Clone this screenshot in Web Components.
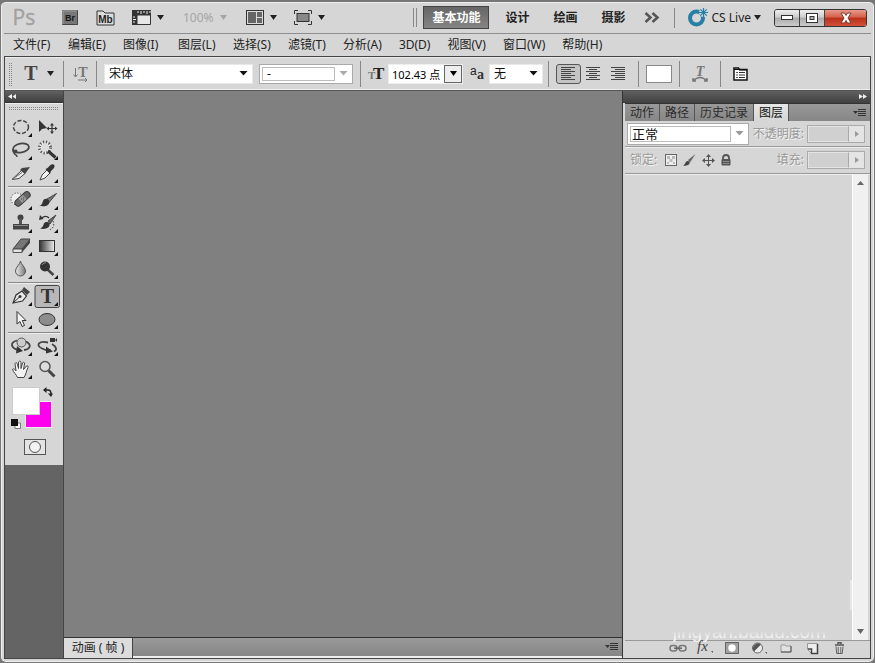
<!DOCTYPE html>
<html lang="zh-CN">
<head>
<meta charset="utf-8">
<title>Ps</title>
<style>
html,body{margin:0;height:100%}
body{background:#777;color:#222;font:12px/16px "Noto Sans","Noto Sans CJK SC",sans-serif;overflow:hidden}
</style>
</head>
<body>
<ps-window></ps-window>
<script>
const RESET = `*,:host{box-sizing:border-box}
button,input{font:inherit;color:inherit;margin:0;padding:0;border:0;background:none;border-radius:0;outline:0}
button{display:inline-flex;align-items:center;justify-content:center}
a{color:inherit;text-decoration:none}
.grip{background:repeating-linear-gradient(#d6d6d6 0 1px,transparent 1px 2px),repeating-linear-gradient(90deg,#888 0 1px,transparent 1px 2px)}`;

function define(name, css, html) {
  const t = document.createElement('template');
  t.innerHTML = `<style>${RESET}${css}</style>${html}`;
  customElements.define(name, class extends HTMLElement {
    constructor() {
      super();
      this.attachShadow({mode: 'open'}).append(t.content.cloneNode(true));
    }
  });
}

// Each entry: width, height, SVG body.
const corner = '<path d="M24 17v4h-4z" fill="#111"/>';
const ICONS = {
  down: [7, 5, '<path d="M0 0h7L3.500 5z" fill="currentColor"/>'],
  down2: [9, 5, '<path d="M.5 0h8l-4 4.500z" fill="currentColor"/>'],
  right: [4, 6, '<path d="M0 0l4 3-4 3z" fill="#999"/>'],
  up: [7, 4, '<path d="M0 4h7L3.500 0z" fill="#666"/>'],
  rewind: [8, 5, '<path d="M4 0v5L0 2.500zM8 0v5L4.500 2.500z" fill="#eee"/>'],
  forward: [8, 5, '<path d="M0 0v5l4-2.500zM4 0v5l4-2.500z" fill="#eee"/>'],
  logo: [24, 20, '<text x="-.5" y="17" font-family="Open Sans,sans-serif" font-size="21" fill="#a2a2a2" stroke="#a2a2a2" stroke-width=".4">Ps</text>'],
  bridge: [16, 15, '<rect width="16" height="15" fill="#777"/><path d="M1 14V1h14" fill="none" stroke="#999"/><path d="M.5 14.500h15V.5" fill="none" stroke="#444"/><text x="8" y="11" text-anchor="middle" font-family="Liberation Sans,sans-serif" font-weight="bold" font-size="9" fill="#151515">Br</text>'],
  mini: [19, 16, '<path d="M1 15V1h6l2 2h9v12z" fill="#ddd" stroke="#333"/><text x="9.500" y="12.500" text-anchor="middle" font-family="Liberation Sans,sans-serif" font-weight="bold" font-size="10" fill="#222">Mb</text>'],
  film: [19, 15, '<path d="M0 0h19v5H5v10H0z" fill="#333"/><path d="M5 5h13.500v9.500H5z" fill="#e6e6e6" stroke="#333"/><path d="M6 1v2M9 1v3M12 1v2M15 1v3M18 1v2M1 7h2M1 9.500h3M1 12h2" stroke="#eee"/>'],
  arrange: [18, 15, '<rect x=".5" y=".5" width="17" height="14" fill="#ddd" stroke="#333"/><path d="M2 2h8v11H2zM11 2h5v5h-5zM11 8h5v5h-5z" fill="#666"/>'],
  screen: [18, 15, '<path d="M.5 4V.5H4M14 .5h3.500V4M17.500 11v3.500H14M4 14.500H.5V11" fill="none" stroke="#333"/><rect x="3" y="3.500" width="12" height="8" fill="#888" stroke="#333"/>'],
  more: [16, 11, '<path d="M1.500 1l5 4.500-5 4.500M8.500 1l5 4.500-5 4.500" fill="none" stroke="#555" stroke-width="2.500"/>'],
  live: [20, 19, '<circle cx="8.500" cy="10" r="6.500" fill="none" stroke="#267fa5" stroke-width="4"/><circle cx="15.500" cy="4.500" r="4.500" fill="#d6d6d6"/><path d="M15.500 0v9M11 4.500h9M12.300 1.300l6.400 6.400M18.700 1.300l-6.400 6.400" stroke="#267fa5" stroke-width="1.200"/>'],
  min: [12, 6, '<rect x=".5" y=".5" width="11" height="4" fill="#fff" stroke="#333"/>'],
  max: [12, 10, '<rect x=".5" y=".5" width="11" height="9" fill="#fff" stroke="#333"/><rect x="4" y="3.500" width="4" height="3" fill="#bbb" stroke="#333"/>'],
  close: [14, 12, '<path d="M2 1h3.500L7 3.500 8.500 1H12L9 6l3 5H8.500L7 8.500 5.500 11H2l3-5z" fill="#fff" stroke="#7d3a30"/>'],
  type: [16, 18, '<text x="8" y="15" text-anchor="middle" font-family="Liberation Serif,serif" font-weight="bold" font-size="20" fill="#444">T</text>'],
  orient: [16, 16, '<path d="M2.500 2v9M.5 8.500l2 2.500 2-2.500M5 14h9M12 12l2 2-2 2" fill="none" stroke="#777"/><text x="10" y="11" text-anchor="middle" font-family="Liberation Serif,serif" font-weight="bold" font-size="14" fill="#777">T</text>'],
  size: [17, 15, '<text x="0" y="13" font-family="Liberation Serif,serif" font-weight="bold" font-size="11" fill="#777">T</text><text x="5" y="13" font-family="Liberation Serif,serif" font-weight="bold" font-size="17" fill="#222">T</text>'],
  aa: [15, 15, '<text x="0" y="9" font-family="Liberation Sans,sans-serif" font-size="12" fill="#222">a</text><text x="7" y="13" font-family="Liberation Serif,serif" font-weight="bold" font-size="14" fill="#333">a</text>'],
  left: [15, 14, '<path d="M0 .5h14M0 2.500h10M0 4.500h14M0 6.500h10M0 8.500h14M0 10.500h10M0 12.500h14" stroke="#444"/>'],
  center: [15, 14, '<path d="M0 .5h14M3 2.500h8M0 4.500h14M3 6.500h8M0 8.500h14M3 10.500h8M0 12.500h14" stroke="#444"/>'],
  rightalign: [15, 14, '<path d="M0 .5h14M4 2.500h10M0 4.500h14M4 6.500h10M0 8.500h14M4 10.500h10M0 12.500h14" stroke="#444"/>'],
  warp: [16, 17, '<path d="M1 16q7-7 14 0M1 13v3h3M12 16h3v-3" fill="none" stroke="#777" stroke-width="1.500"/><text x="8" y="11" text-anchor="middle" font-family="Liberation Serif,serif" font-weight="bold" font-style="italic" font-size="14" fill="#777">T</text>'],
  panel: [15, 15, '<path d="M1 14V2h4.500l1 1.500H14V14z" fill="#fff" stroke="#111" stroke-width="1.500"/><path d="M1 3.500h5M6 4h8" stroke="#111"/><path d="M6 6.500h6M6 9h6M6 11.500h6" stroke="#333"/><path d="M3 6.500h2M3 9h2M3 11.500h2" stroke="#555"/>'],
  menu: [14, 9, '<path d="M0 3h5L2.500 6z" fill="#333"/><path d="M5 1.500h8M5 3.500h8M5 5.500h8M5 7.500h8" stroke="#333"/>'],
  marquee: [26, 23, '<ellipse cx="13" cy="11" rx="7.500" ry="6.500" fill="none" stroke="#444" stroke-width="1.500" stroke-dasharray="4 1.800"/>' + corner],
  move: [26, 23, '<path d="M5 4v12l3-3 5-1z" fill="#333"/><path d="M18 8v9M13.500 12.500h9" stroke="#333" stroke-width="1.200"/><path d="M18 7l2 2.500h-4zM18 18l2-2.500h-4zM12.500 12.500l2.500-2v4zM23.500 12.500l-2.500-2v4z" fill="#333"/>'],
  lasso: [26, 23, '<ellipse cx="13" cy="9" rx="8" ry="4.500" transform="rotate(-10 13 9)" fill="none" stroke="#444" stroke-width="1.800"/><path d="M5.500 10c-2 3 2 5 3 2.500S5 11.500 6 14s3 1 3 4" fill="none" stroke="#444" stroke-width="1.500"/>' + corner],
  wand: [26, 23, '<circle cx="11" cy="8.500" r="5.500" fill="#efefef" stroke="#555" stroke-width="3" stroke-dasharray="1.200 1.700"/><circle cx="11" cy="8.500" r="4" fill="#ddd"/><path d="M14 12l7.500 6.500" stroke="#333" stroke-width="3"/>' + corner],
  slice: [26, 23, '<path d="M4 17.500L14 8l3 3.500-6 5z" fill="#eee" stroke="#444"/><path d="M12 8l2-2 8-1-5 7z" fill="#444"/><path d="M4 17.500l10-7" stroke="#666"/>' + corner],
  dropper: [26, 23, '<path d="M6 18l2-5 5-5 3 3-5 5z" fill="#f2f2f2" stroke="#444"/><path d="M11.500 7l2-1 3-3c3-2 5 0 3.500 3l-3 3-1 3z" fill="#333"/>' + corner],
  heal: [26, 23, '<circle cx="9" cy="10" r="6" fill="#eee" stroke="#333" stroke-dasharray="1 1.800"/><rect x="5.500" y="7" width="18" height="6.500" rx="3" transform="rotate(-42 14 10)" fill="#666" stroke="#3a3a3a"/><rect x="11.500" y="7.500" width="6" height="5.500" transform="rotate(-42 14 10)" fill="#999"/><path d="M13 10h.8M15 9h.8M15 11h.8" stroke="#333"/>' + corner],
  brush: [26, 23, '<path d="M22.500 4.500L13 10l2 3.500z" fill="#777" stroke="#444"/><path d="M5 16.500c3 0 3-2 4-4.500s4-3 6-.5c2 5-5 7-10 5z" fill="#333"/>' + corner],
  stamp: [26, 23, '<circle cx="12.500" cy="5.500" r="3" fill="#444"/><path d="M11 7h3v5h-3z" fill="#555"/><path d="M5 12h16v5.500H5z" fill="#444"/><path d="M6 13.500h14" stroke="#888"/>' + corner],
  history: [26, 23, '<path d="M22 3l-8 6 2 3z" fill="#666" stroke="#444"/><path d="M6 16.500c3-1 3-3 4-5s4-2 5.500 0c1 4-4 6.500-9.500 5z" fill="#333"/><path d="M15 6C13 4 10 4 8 6" fill="none" stroke="#333" stroke-width="1.500"/><path d="M5 8l1-5 3.500 4z" fill="#333"/><path d="M19 9c2 4 0 8-4 9" fill="none" stroke="#444" stroke-dasharray="1.500 1.500"/>' + corner],
  eraser: [26, 23, '<path d="M5 14l8-10h9l-8 10z" fill="#777" stroke="#444"/><path d="M14 14l8-10v4l-8 9.500z" fill="#444"/><path d="M5 14h9v3.500H5z" fill="#e4e4e4" stroke="#555"/>' + corner],
  gradient: [26, 23, '<defs><linearGradient id="g"><stop stop-color="#333"/><stop offset="1" stop-color="#eee"/></linearGradient></defs><rect x="5.500" y="5.500" width="15" height="11" fill="url(#g)" stroke="#333"/>' + corner],
  drop: [26, 23, '<defs><linearGradient id="d"><stop stop-color="#eee"/><stop offset="1" stop-color="#777"/></linearGradient></defs><path d="M12.500 3c0 3-5 6-5 10a5 5 0 0 0 10 0c0-4-5-7-5-10z" fill="url(#d)" stroke="#555"/>' + corner],
  dodge: [26, 23, '<path d="M13 11l6.500 6" stroke="#444" stroke-width="2.500"/><circle cx="11" cy="8.500" r="5" fill="#333"/><path d="M8 7c1-2 3-2.500 4-2" fill="none" stroke="#888"/>' + corner],
  pen: [26, 23, '<path d="M5 18l3-8 6-4 4.500 5-4 5z" fill="#e8e8e8" stroke="#333" stroke-width="1.200"/><path d="M5 18l7-6.500" stroke="#333"/><circle cx="12" cy="11.500" r="1.500" fill="#333"/><path d="M14 5l2-3 6 5-3 3z" fill="#444"/>' + corner],
  typetool: [26, 23, '<rect x="1" y=".5" width="24.500" height="22" rx="2" fill="#b8b8b8" stroke="#444"/><text x="13.500" y="18" text-anchor="middle" font-family="Liberation Serif,serif" font-weight="bold" font-size="20" fill="#333">T</text>' + corner],
  select: [26, 23, '<path d="M9 3.500v12.500l3-2.500 2 5 2.500-1-2.200-5h3.700z" fill="#f4f4f4" stroke="#333"/>' + corner],
  ellipse: [26, 23, '<ellipse cx="13" cy="11.500" rx="8" ry="6" fill="#8d8d8d" stroke="#333"/>' + corner],
  rotate: [26, 23, '<path d="M9 5.500c-8 2-6 8 2 9.500M18 6.500c7 4 3 8-2 8.500" fill="none" stroke="#444" stroke-width="1.800"/><path d="M9 11l6 5-7 2.500z" fill="#333"/><circle cx="13.500" cy="7.500" r="4.500" fill="#ccc" stroke="#555"/>' + corner],
  camera: [26, 23, '<path d="M14 7.500C5 5.500 1 10 8 13.500c4 2 7 2 9 1.500M18 9c5 3 5 6 2 7.500" fill="none" stroke="#444" stroke-width="1.800"/><path d="M12 11.500l7 5-7 2z" fill="#333"/><path d="M16 3h5v4h-5zM21 5l2-2v4z" fill="#333"/>' + corner],
  hand: [26, 23, '<path d="M9.500 19.500c-1-3-4-5-5-8 1-1.500 2.500 0 3.500 1.500L7 5.500c1-1.500 2-1 2.500 1l1 4V4c1-1.500 2.500-1 2.500.5v6l1.500-5.500c1-1.500 2.500-.5 2 1l-1 5.500 3-3.500c1.500-.5 2 .5 1.500 1.500-1.500 3-2 7-4 10z" fill="#f2f2f2" stroke="#444"/>' + corner],
  zoom: [26, 23, '<path d="M14.500 12.500l6 6" stroke="#444" stroke-width="3"/><circle cx="11" cy="8.500" r="5" fill="#ddd" stroke="#555" stroke-width="1.500"/>'],
  swap: [10, 10, '<path d="M2 3h3q3 0 3 4" fill="none" stroke="#222" stroke-width="1.500"/><path d="M0 3l3.500-3v6zM5 6.500h5L8 10z" fill="#222"/>'],
  reset: [10, 10, '<path d="M4 4h5.500v5.500H4z" fill="#fff" stroke="#777"/><path d="M0 0h7v7H0z" fill="#111"/>'],
  mask: [22, 16, '<rect x=".5" y=".5" width="21" height="15" fill="#e4e4e4" stroke="#555"/><circle cx="11" cy="8" r="5.500" fill="#f2f2f2" stroke="#555"/>'],
  checker: [12, 12, '<rect x=".5" y=".5" width="11" height="11" fill="#eee" stroke="#666"/><path d="M2 2h3v3H2zM7 2h3v3H7zM4.500 5h3v3h-3zM2 8h2v2H2zM8 8h2v2H8z" fill="#bbb"/>'],
  paint: [13, 12, '<path d="M12.500 0L5 6l2 2.500z" fill="#666"/><path d="M0 11.500c2 0 2-4 4.500-4.500s3 3 .5 4-3 .8-5 .5z" fill="#444"/>'],
  cross: [13, 13, '<path d="M6.500 1v11M1 6.500h11" stroke="#555"/><path d="M6.500 0l2.500 3H4zM6.500 13L9 10H4zM0 6.500L3 4v5zM13 6.500L10 4v5z" fill="#555"/>'],
  lock: [10, 12, '<path d="M2 6V4q0-3 3-3t3 3v2" fill="none" stroke="#555" stroke-width="1.800"/><rect x=".5" y="5" width="9" height="6.500" rx="1" fill="#555"/><path d="M2 7.500h6M2 9.500h6" stroke="#888"/>'],
  link: [18, 9, '<rect x="1" y="1.500" width="7" height="5.500" rx="2.700" fill="none" stroke="#777" stroke-width="1.500"/><rect x="10" y="1.500" width="7" height="5.500" rx="2.700" fill="none" stroke="#777" stroke-width="1.500"/><path d="M5 4.200h8" stroke="#666" stroke-width="1.500"/>'],
  fx: [17, 14, '<text x="1" y="10" font-family="Liberation Serif,serif" font-style="italic" font-size="15" fill="#444">fx</text><path d="M15 10h2v2z" fill="#555"/>'],
  addmask: [14, 12, '<rect x=".5" y=".5" width="13" height="11" fill="#a0a0a0" stroke="#666"/><circle cx="7" cy="6" r="3.700" fill="#fff"/>'],
  adjust: [16, 13, '<circle cx="6.500" cy="6" r="5" fill="#eee" stroke="#666"/><path d="M3 9.500A5 5 0 0 1 10 2.500z" fill="#555"/><path d="M14 10h2v2z" fill="#555"/>'],
  folder: [12, 10, '<path d="M1 2h4l1 1h5v6H1z" fill="#e2e2e2" stroke="#999"/><path d="M1 9h10V3" fill="none" stroke="#555"/>'],
  page: [11, 11, '<path d="M.5.5h10v10h-6l-4-4z" fill="#eee" stroke="#999"/><path d="M10.500 1v9.500H4.500V6H1" fill="none" stroke="#444" stroke-width="1.500"/>'],
  trash: [11, 12, '<path d="M1 3h9M4 2V.8h3V2" fill="none" stroke="#555" stroke-width="1.500"/><path d="M2 4.500l.7 7h5.600l.7-7M4.200 5v6M6.800 5v6" fill="none" stroke="#666"/>']
};

customElements.define('ps-icon', class extends HTMLElement {
  connectedCallback() {
    if (this.shadowRoot) return;
    const [w, h, body] = ICONS[this.getAttribute('name')];
    this.attachShadow({mode: 'open'}).innerHTML =
      `<style>:host{display:block;flex:none}svg{display:block;overflow:visible}</style><svg width="${w}" height="${h}" viewBox="0 0 ${w} ${h}" aria-hidden="true">${body}</svg>`;
  }
});

define('ps-select', `:host{display:grid;align-items:center;background:#fff;border:1px solid var(--edge,#e8e8e8);height:var(--h,22px);font-size:12px}
ps-icon{grid-area:1/1;justify-self:end;margin-right:4px;color:var(--arrow,#111);pointer-events:none}
::slotted(select){grid-area:1/1;appearance:none;border:0;margin:0;outline:0;background:none;font:inherit;color:#111;padding:0 18px 0 4px;width:100%;min-width:0;height:100%}
:host([framed])::before{content:"";grid-area:1/1;align-self:stretch;margin:2px 17px 2px 2px;border:1px solid #bbb}`,
  `<slot></slot><ps-icon name="down2"></ps-icon>`);

define('ps-titlebar', `:host{display:flex;align-items:center;height:32px;padding:0 4px 0 9px;border-bottom:1px solid #8e8e8e;gap:7px}
button{flex:none}.br{margin-left:18px}.mb{margin-left:11px}
.film,.arr,.scr{gap:6px}.film{margin-left:10px}.arr{margin-left:12px}.scr{margin-left:10px}
.zoom{color:#a5a5a5;gap:6px;margin-left:12px}
.right{margin-left:auto;display:flex;align-items:center;flex:none}
.dbl{width:4px;height:19px;border:solid #888;border-width:0 1px;margin-right:6px}
nav{display:flex}nav button{height:23px;width:48px;font-weight:bold}
nav .on{width:66px;margin-right:4px;background:linear-gradient(#666,#858585);border:1px solid #444;color:#fff}
.more{margin:0 14px 0 7px}.sep{width:1px;height:20px;background:#888;margin-right:13px}
.live{gap:3px}.win{display:flex;margin-left:13px;border:1px solid #333;border-radius:3px;overflow:hidden;height:18px}
.win button{width:25px;height:100%;background:linear-gradient(#eee,#ccc 45%,#aaa 50%,#ccc);border-right:1px solid #444}
.win .x{width:41px;border:0;background:linear-gradient(#e79a8a,#d5604a 45%,#b93019 50%,#d1503a)}`,
`<ps-icon name="logo"></ps-icon>
<button class="br" aria-label="Bridge"><ps-icon name="bridge"></ps-icon></button>
<button class="mb" aria-label="Mini Bridge"><ps-icon name="mini"></ps-icon></button>
<button class="film" aria-label="Extras"><ps-icon name="film"></ps-icon><ps-icon name="down"></ps-icon></button>
<button class="zoom">100%<ps-icon name="down"></ps-icon></button>
<button class="arr" aria-label="Arrange"><ps-icon name="arrange"></ps-icon><ps-icon name="down"></ps-icon></button>
<button class="scr" aria-label="Screen mode"><ps-icon name="screen"></ps-icon><ps-icon name="down"></ps-icon></button>
<div class="right"><span class="dbl"></span>
<nav><button class="on">基本功能</button><button>设计</button><button>绘画</button><button>摄影</button></nav>
<button class="more" aria-label="More"><ps-icon name="more"></ps-icon></button><span class="sep"></span>
<button class="live"><ps-icon name="live"></ps-icon>CS Live<ps-icon name="down"></ps-icon></button>
<div class="win"><button aria-label="Minimize"><ps-icon name="min"></ps-icon></button><button aria-label="Maximize"><ps-icon name="max"></ps-icon></button><button class="x" aria-label="Close"><ps-icon name="close"></ps-icon></button></div></div>`);

define('ps-menubar', `:host{display:block;height:22px;padding:0 9px}nav{display:flex;gap:17px;height:100%;align-items:center;white-space:nowrap}a{min-width:38px}a.s{min-width:0}`,
`<nav>${'文件(F) 编辑(E) 图像(I) 图层(L) 选择(S) 滤镜(T) 分析(A) 3D(D) 视图(V) 窗口(W) 帮助(H)'.split(' ').map(s => `<a href="#"${s[0] === '3' ? ' class="s"' : ''}>${s}</a>`).join('')}</nav>`);

define('ps-options', `:host{display:flex;align-items:center;height:35px;border:1px solid #444;border-bottom-color:#555;background:#d6d6d6;box-shadow:inset 0 1px #eee,inset 0 -1px #eee;padding:0 4px;--h:20px}
:host>*{flex:none}.grip{width:4px;height:24px}
.t{gap:8px;margin-left:10px}.sep{width:1px;height:26px;background:#888;margin:0 7px}
.font{width:149px}.style{width:94px;margin-left:6px;--arrow:#aaa;--edge:#aaa}
.size{display:flex;align-items:center;border:1px solid #eee;height:20px;background:#fff;color:#000;width:75px;margin-left:3px;font-size:11px}
.size input{width:55px;height:18px;padding-left:3px}.size button{width:18px;height:18px;border:1px solid #666;background:#eee}
.a{margin-left:7px}.aa{width:54px;margin-left:4px}.al{display:flex}.al button{width:25px;height:20px}.al .on{border:1px solid #555;border-radius:3px;background:#c4c4c4}
.sw{width:26px;height:18px;background:#fff;border:1px solid #888}.wide{margin:0 12px}`,
`<span class="grip"></span><button class="t" aria-label="Type tool"><ps-icon name="type"></ps-icon><ps-icon name="down"></ps-icon></button>
<span class="sep" style="margin:0 9px"></span><button aria-label="Orientation"><ps-icon name="orient"></ps-icon></button><span class="sep"></span>
<ps-select class="font"><select aria-label="Font"><option>宋体</option></select></ps-select>
<ps-select class="style" framed><select aria-label="Style"><option>&nbsp;-</option></select></ps-select>
<span class="sep"></span><ps-icon name="size"></ps-icon>
<div class="size"><input aria-label="Size" value="102.43 点"><button aria-label="Sizes"><ps-icon name="down"></ps-icon></button></div>
<ps-icon class="a" name="aa"></ps-icon>
<ps-select class="aa"><select aria-label="Anti-aliasing"><option>无</option></select></ps-select>
<span class="sep" style="margin-left:5px"></span>
<div class="al"><button class="on" aria-label="Left"><ps-icon name="left"></ps-icon></button><button aria-label="Center"><ps-icon name="center"></ps-icon></button><button aria-label="Right"><ps-icon name="rightalign"></ps-icon></button></div>
<span class="sep"></span><button class="sw" aria-label="Text color"></button>
<span class="sep" style="margin-right:12px"></span><button aria-label="Warp text"><ps-icon name="warp"></ps-icon></button>
<span class="sep wide"></span><button aria-label="Panels"><ps-icon name="panel"></ps-icon></button>`);

const tools = names => `<div class="g">${names.split(' ').map(n => `<button aria-label="${n}"><ps-icon name="${n}"></ps-icon></button>`).join('')}</div>`;
define('ps-toolbox', `:host{display:flex;flex-direction:column;background:#646464;border-right:1px solid #444}
header{height:12px;background:linear-gradient(#606060,#404040);padding:3px;border-bottom:1px solid #333}
section{background:#d6d6d6;padding:3px 3px 10px;box-shadow:inset 0 1px #eee}
.grip{height:4px;margin:0 1px 6px}
.g{display:grid;grid-template-columns:26px 26px;grid-auto-rows:23px;padding-bottom:1px}
.g+.g{border-top:1px solid #888;box-shadow:inset 0 1px #eee;padding-top:2px}
.sw{display:grid;grid-template-columns:13px 15px 12px;grid-template-rows:14px 14px 12px;margin:5px 0 0 4px;align-items:start}
.fg{grid-area:1/1/3/3;width:28px;height:28px;background:#fff;border:1px solid #ccc;z-index:1}
.bg{grid-area:2/2/4/4;width:27px;height:27px;background:#f0e;border:1px solid #eee}
.s{grid-area:1/3;margin-left:3px}.r{grid-area:3/1;margin:4px 4px 0 -2px}
.m{margin:12px auto 0 16px;display:flex}`,
`<header><ps-icon name="rewind"></ps-icon></header><section><div class="grip"></div>
${tools('marquee move lasso wand slice dropper')}${tools('heal brush stamp history eraser gradient drop dodge')}${tools('pen typetool select ellipse')}${tools('rotate camera hand zoom')}
<div class="sw"><button class="fg" aria-label="Foreground"></button><button class="bg" aria-label="Background"></button><button class="s" aria-label="Swap"><ps-icon name="swap"></ps-icon></button><button class="r" aria-label="Reset"><ps-icon name="reset"></ps-icon></button></div>
<button class="m" aria-label="Quick mask"><ps-icon name="mask"></ps-icon></button></section>`);

define('ps-timeline', `:host{display:flex;height:21px;background:linear-gradient(#999,#868686);border-top:1px solid #333;border-bottom:2px solid #eee}
button{width:69px;background:#dcdcdc;border-right:1px solid #444;height:20px}
ps-icon{margin:4px 3px 0 auto}`, `<button>动画 ( 帧 )</button><ps-icon name="menu"></ps-icon>`);

define('ps-layers', `:host{display:flex;flex-direction:column;background:#d6d6d6;border-left:1px solid #333;padding-left:2px;--arrow:#999}
header{height:12px;background:linear-gradient(#606060,#404040);margin-left:-2px;padding:3px;display:flex;justify-content:flex-end}
.tabs{display:flex;height:18px;background:linear-gradient(#999,#868686);border-top:1px solid #333}
.tabs button{padding:0 5px;border-right:1px solid #555;color:#2b2b2b;height:17px}.tabs .on{background:linear-gradient(#e6e6e6,#d6d6d6);color:#111}
.tabs ps-icon{margin:4px 3px 0 auto}
.row{display:flex;align-items:center;border-bottom:1px solid #999;box-shadow:0 1px #eee;padding:0 5px 0 2px;color:#999;text-shadow:1px 1px #f2f2f2}
.blend{height:26px}.lock{height:27px;gap:6px;padding-left:5px}
.row ps-select{width:122px;--h:22px;--edge:#aaa;font-size:13px}
label{margin-left:auto;margin-right:3px}.lock label{margin-right:-3px}
.lock span+ps-icon{margin-left:2px}
.val{display:flex;width:58px;border:1px solid #aaa;height:18px;flex:none}.val input{width:41px;min-width:0;background:#d0d0d0;border:1px solid #e4e4e4;border-right:1px solid #aaa}
.val button{flex:1;background:#e4e4e4}
.list{flex:1;display:flex;min-height:0;margin-right:2px}.list>div:first-child{flex:1;display:flex;align-items:flex-end;justify-content:flex-end;position:relative}
.mark{position:absolute;right:26px;bottom:-2px;font:19px/20px "Liberation Sans",sans-serif;color:#f6f6f6;-webkit-mask:linear-gradient(transparent 45%,#000 80%);pointer-events:none}
.edge{width:2px;height:30px;background:#e8e8e8;margin-bottom:30px}
.bar{width:16px;background:#f0f0f0;border-left:1px solid #fff;display:flex;flex-direction:column;justify-content:space-between;align-items:center;padding:7px 0 6px;color:#666}
footer{display:flex;align-items:center;justify-content:flex-end;height:18px;padding:0 17px 3px 0;border-top:1px solid #999}footer button{width:27px;height:14px}`,
`<header><ps-icon name="forward"></ps-icon></header>
<div class="tabs"><button>动作</button><button>路径</button><button>历史记录</button><button class="on">图层</button><ps-icon name="menu"></ps-icon></div>
<div class="row blend"><ps-select framed><select aria-label="Blend mode"><option>正常</option></select></ps-select><label for="o">不透明度:</label><span class="val"><input id="o"><button aria-label="Opacity slider"><ps-icon name="right"></ps-icon></button></span></div>
<div class="row lock"><span>锁定:</span><ps-icon name="checker"></ps-icon><ps-icon name="paint"></ps-icon><ps-icon name="cross"></ps-icon><ps-icon name="lock"></ps-icon><label for="f">填充:</label><span class="val"><input id="f"><button aria-label="Fill slider"><ps-icon name="right"></ps-icon></button></span></div>
<div class="list"><div><span class="mark">jingyan.baidu.com</span><span class="edge"></span></div><div class="bar"><ps-icon name="up"></ps-icon><ps-icon name="down"></ps-icon></div></div>
<footer>${'link fx addmask adjust folder page trash'.split(' ').map(n => `<button aria-label="${n}"><ps-icon name="${n}"></ps-icon></button>`).join('')}</footer>`);

define('ps-window', `:host{display:flex;flex-direction:column;height:100vh;background:#d6d6d6;border:1px solid #777;border-top-width:2px;border-radius:6px;box-shadow:inset 0 0 0 1px #eee;padding:0 3px 3px}
main{flex:1;display:grid;grid-template-columns:59px minmax(0,1fr) 248px;border:solid #444;border-width:0 1px 1px;min-height:0}
.doc{display:flex;flex-direction:column;background:#808080;min-width:0}.canvas{flex:1}`,
`<ps-titlebar></ps-titlebar><ps-menubar></ps-menubar><ps-options></ps-options>
<main><ps-toolbox></ps-toolbox><div class="doc"><div class="canvas"></div><ps-timeline></ps-timeline></div><ps-layers></ps-layers></main>`);
</script>
</body>
</html>
